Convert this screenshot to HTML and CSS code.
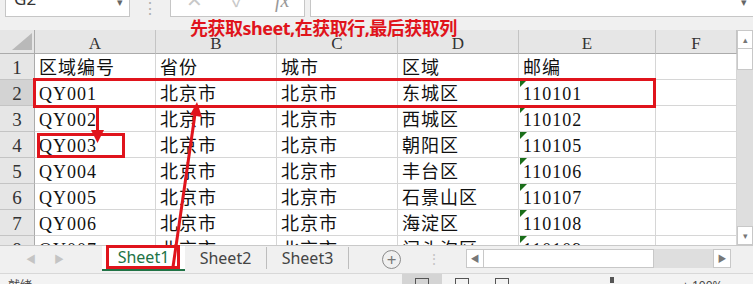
FILE: index.html
```html
<!DOCTYPE html>
<html>
  <head>
    <title>Sheet1</title>
    <link rel="stylesheet" href="styles.css">
  </head>
  <body>
    <div class="formula-bar">
      <div class="name-box">G2<span class="drop">&#9662;</span></div>
      <div class="grip">&#8942;</div>
      <div class="fn-box"><span>&#10005;</span><span>&#10003;</span><span class="fx">fx</span></div>
      <div class="input-box"><span class="drop">&#9662;</span></div>
    </div>
    <div class="band"></div>

    <div class="sheet">
      <div class="grid">
        <div class="corner"></div>
        <div class="col-head">A</div>
        <div class="col-head">B</div>
        <div class="col-head">C</div>
        <div class="col-head">D</div>
        <div class="col-head">E</div>
        <div class="col-head">F</div>

        <div class="row-head">1</div>
        <div class="cell">区域编号</div><div class="cell">省份</div><div class="cell">城市</div><div class="cell">区域</div><div class="cell">邮编</div><div class="cell"></div>

        <div class="row-head sel">2</div>
        <div class="cell">QY001</div><div class="cell">北京市</div><div class="cell">北京市</div><div class="cell">东城区</div><div class="cell num">110101</div><div class="cell"></div>

        <div class="row-head">3</div>
        <div class="cell">QY002</div><div class="cell">北京市</div><div class="cell">北京市</div><div class="cell">西城区</div><div class="cell num">110102</div><div class="cell"></div>

        <div class="row-head">4</div>
        <div class="cell">QY003</div><div class="cell">北京市</div><div class="cell">北京市</div><div class="cell">朝阳区</div><div class="cell num">110105</div><div class="cell"></div>

        <div class="row-head">5</div>
        <div class="cell">QY004</div><div class="cell">北京市</div><div class="cell">北京市</div><div class="cell">丰台区</div><div class="cell num">110106</div><div class="cell"></div>

        <div class="row-head">6</div>
        <div class="cell">QY005</div><div class="cell">北京市</div><div class="cell">北京市</div><div class="cell">石景山区</div><div class="cell num">110107</div><div class="cell"></div>

        <div class="row-head">7</div>
        <div class="cell">QY006</div><div class="cell">北京市</div><div class="cell">北京市</div><div class="cell">海淀区</div><div class="cell num">110108</div><div class="cell"></div>

        <div class="row-head">8</div>
        <div class="cell">QY007</div><div class="cell">北京市</div><div class="cell">北京市</div><div class="cell">门头沟区</div><div class="cell num">110109</div><div class="cell"></div>
      </div>
      <div class="vscroll">
        <div class="sbtn up">&#9652;</div>
        <div class="vthumb"></div>
        <div class="vtrack"></div>
        <div class="sbtn down">&#9662;</div>
      </div>
    </div>

    <div class="tabbar">
      <div class="tab-nav"><span>&#9664;</span><span>&#9654;</span></div>
      <div class="tab active">Sheet1</div>
      <div class="tab">Sheet2</div>
      <div class="tab">Sheet3</div>
      <div class="add">+</div>
      <div class="grip small">&#8942;</div>
      <div class="hscroll">
        <div class="sbtn">&#9664;</div>
        <div class="hthumb"></div>
        <div class="htrack"></div>
        <div class="sbtn">&#9654;</div>
      </div>
    </div>

    <div class="status">
      <span class="ready">就绪</span>
      <div class="views">
        <span class="view on"></span>
        <span class="view"></span>
        <span class="view"></span>
      </div>
      <span class="zoom-mark"></span>
      <span class="zoom-pct">+ 100%</span>
    </div>

    <!-- annotations -->
    <div class="note">先获取sheet,在获取行,最后获取列</div>
    <svg class="marks" width="753" height="284" viewBox="0 0 753 284">
      <g fill="none" stroke="#e0141c" stroke-width="3">
        <rect x="34.5" y="79.5" width="620" height="27"/>
        <rect x="38.5" y="134.5" width="85" height="22"/>
        <rect x="107.5" y="246.5" width="71" height="21"/>
        <line x1="97.5" y1="108" x2="97.5" y2="131"/>
        <line x1="173" y1="267" x2="195" y2="114"/>
      </g>
      <g fill="#e0141c">
        <polygon points="91,130 104,130 97.5,143"/>
        <polygon points="197,102 202,117 190,115"/>
      </g>
    </svg>
  </body>
</html>
```

FILE: styles.css
```css
html, body {
  margin: 0;
  padding: 0;
}

body {
  position: relative;
  width: 753px;
  height: 284px;
  overflow: hidden;
  background: #f0f0f0;
  font-family: "Noto Sans", "Noto Sans CJK SC", sans-serif;
  color: #222;
}

/* formula bar, cut off at the top */
.formula-bar {
  display: flex;
  align-items: flex-end;
  height: 17px;
  overflow: hidden;
}

.name-box,
.fn-box,
.input-box {
  position: relative;
  height: 30px;
  background: #ffffff;
  border: 1px solid #c6c6c6;
  box-sizing: border-box;
}

.name-box {
  width: 125px;
  margin-left: 5px;
  padding: 2px 0 0 8px;
  font-size: 17px;
  line-height: 18px;
  color: #333;
}

.drop {
  position: absolute;
  right: 6px;
  top: 8px;
  font-size: 11px;
  line-height: 11px;
  color: #666;
}

.grip {
  width: 40px;
  text-align: center;
  color: #b0b0b0;
  font-size: 16px;
  line-height: 17px;
  align-self: flex-start;
}

.fn-box {
  display: flex;
  justify-content: space-around;
  width: 135px;
  padding-top: 0;
  font-size: 20px;
  line-height: 24px;
  color: #c8c8c8;
}

.fn-box .fx {
  font-family: "Liberation Serif", serif;
  font-style: italic;
  color: #999;
}

.input-box {
  flex: 1;
  margin-left: 5px;
  border-right: none;
}

.band {
  height: 13px;
}

/* sheet grid */
.sheet {
  display: flex;
  height: 215px;
}

.grid {
  display: grid;
  grid-template-columns: 35px 121px 121px 121px 121px 137px 81px;
  grid-template-rows: 24px;
  grid-auto-rows: 26px;
  width: 737px;
  overflow: hidden;
  background: #ffffff;
  font-family: "Liberation Serif", "Noto Sans CJK SC", serif;
}

.grid > div {
  box-sizing: border-box;
  border-right: 1px solid #d6d6d6;
  border-bottom: 1px solid #d6d6d6;
}

.corner {
  position: relative;
  background: #e6e6e6;
  border-color: #ababab !important;
}

.corner::after {
  content: "";
  position: absolute;
  right: 2px;
  bottom: 3px;
  border-left: 20px solid transparent;
  border-bottom: 17px solid #b9b9b9;
}

.col-head {
  background: #e6e6e6;
  border-right-color: #c4c4c4 !important;
  border-bottom-color: #ababab !important;
  text-align: center;
  font-size: 17px;
  line-height: 28px;
  color: #333;
}

.row-head {
  background: #e6e6e6;
  border-right-color: #ababab !important;
  border-bottom-color: #c4c4c4 !important;
  text-align: center;
  font-size: 19px;
  line-height: 28px;
  color: #333;
}

.row-head.sel {
  background: #d3d3d3;
}

.cell {
  padding: 1px 0 0 4px;
  font-size: 18px;
  line-height: 26px;
  letter-spacing: 1px;
  white-space: nowrap;
  color: #111;
}

.cell.num {
  position: relative;
}

.cell.num::before {
  content: "";
  position: absolute;
  left: 1px;
  top: 0;
  border-top: 7px solid #1a6e1a;
  border-right: 7px solid transparent;
}

/* vertical scrollbar */
.vscroll {
  display: flex;
  flex-direction: column;
  width: 16px;
  background: #dedede;
}

.sbtn {
  width: 16px;
  height: 19px;
  background: #ffffff;
  border: 1px solid #c8c8c8;
  box-sizing: border-box;
  font-size: 9px;
  line-height: 17px;
  text-align: center;
  color: #777;
}

.vthumb {
  height: 20px;
  background: #ffffff;
  border: 1px solid #c8c8c8;
  border-top: none;
}

.vtrack {
  flex: 1;
}

/* sheet tabs */
.tabbar {
  display: flex;
  align-items: flex-start;
  height: 28px;
  border-top: 1px solid #c9c9c9;
  box-sizing: border-box;
  font-size: 16px;
}

.tab-nav {
  display: flex;
  gap: 18px;
  width: 102px;
  padding: 5px 0 0 26px;
  box-sizing: border-box;
  font-size: 10px;
  line-height: 16px;
  color: #c4c4c4;
}

.tab {
  width: 81px;
  height: 22px;
  margin-top: 1px;
  border-right: 1px solid #bdbdbd;
  text-align: center;
  line-height: 22px;
  color: #444;
}

.tab.active {
  width: 83px;
  height: 23px;
  margin-top: 0;
  background: #ffffff;
  color: #217346;
  border-right: none;
  border-bottom: 2px solid #217346;
}

.add {
  width: 17px;
  height: 17px;
  margin: 4px 0 0 33px;
  border: 1px solid #8a8a8a;
  border-radius: 50%;
  text-align: center;
  font-size: 17px;
  line-height: 17px;
  color: #777;
}

.grip.small {
  width: 65px;
  font-size: 14px;
  line-height: 26px;
  color: #c4c4c4;
}

.hscroll {
  display: flex;
  width: 265px;
  margin-top: 3px;
  background: #dedede;
}

.hscroll .sbtn {
  width: 18px;
}

.hthumb {
  width: 170px;
  height: 19px;
  box-sizing: border-box;
  background: #ffffff;
  border: 1px solid #c8c8c8;
  border-left: none;
}

.htrack {
  flex: 1;
}

/* status bar */
.status {
  position: relative;
  display: flex;
  height: 11px;
  background: #f3f3f3;
  border-top: 1px solid #d8d8d8;
  font-size: 12px;
  line-height: 20px;
  color: #444;
}

.ready {
  margin: 2px 0 0 8px;
}

.views {
  display: flex;
  margin-left: 370px;
}

.view {
  width: 40px;
  position: relative;
}

.view::after {
  content: "";
  position: absolute;
  left: 13px;
  top: 4px;
  width: 12px;
  height: 10px;
  border: 1px solid #555;
}

.view.on {
  background: #d4d4d4;
}

.zoom-mark {
  width: 4px;
  height: 6px;
  margin: 3px 0 0 88px;
  background: #555;
}

.zoom-pct {
  margin: 2px 0 0 68px;
}

/* red annotations */
.note {
  position: absolute;
  left: 190px;
  top: 17px;
  font-size: 18px;
  font-weight: bold;
  line-height: 22px;
  letter-spacing: -0.5px;
  color: #e0141c;
  white-space: nowrap;
}

.marks {
  position: absolute;
  left: 0;
  top: 0;
  pointer-events: none;
}
```
